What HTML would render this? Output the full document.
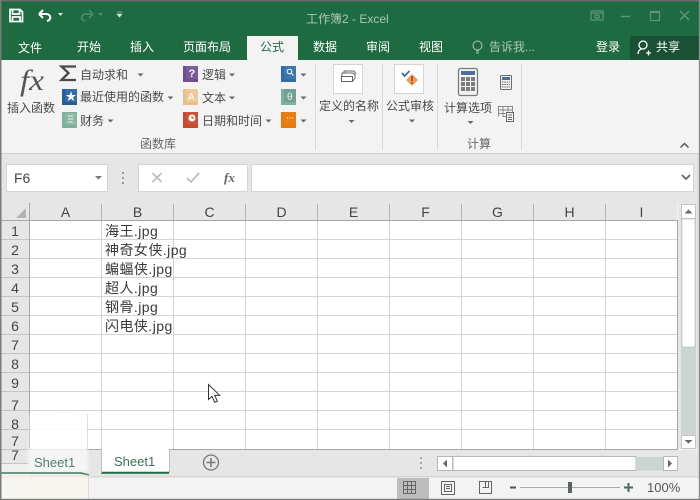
<!DOCTYPE html>
<html><head><meta charset="utf-8"><style>
html,body{margin:0;padding:0;width:700px;height:500px;overflow:hidden;background:#f3f3f3}
svg{display:block}
text{font-family:"Liberation Sans","Noto Sans CJK SC",sans-serif}
.t{font-size:12px;fill:#4a4a4a}
.w{font-size:12px;fill:#fff}
.h{font-size:14px;fill:#444;text-anchor:middle}
.c{font-size:14px;fill:#3a3a3a;letter-spacing:.45px}
.g{fill:none;stroke:#d4d4d4;stroke-width:1}
</style></head><body>
<svg width="700" height="500" viewBox="0 0 700 500" xmlns="http://www.w3.org/2000/svg">
<defs>
<filter id="b"><feGaussianBlur stdDeviation="1.6"/></filter>
</defs>
<rect width="700" height="500" fill="#f3f3f3"/>
<!-- title bar -->
<rect x="0" y="0" width="700" height="60" fill="#1f6b41"/>
<rect x="0" y="0" width="700" height="1.500" fill="#6b6b6b"/>
<!-- QAT -->
<g fill="none" stroke="#fff" stroke-width="1.700">
<path d="M10 9.500h10l2.500 2.500v9.500h-12.500z"/><path d="M12.500 9.500v4.500h7v-4.500M12.500 21.500v-4.500h7.500v4.500"/>
<path d="M39 14l4-4M39 14l4 4" stroke-width="2"/><path d="M39 14h7c5 0 6 6 1 7" stroke-width="2"/>
</g>
<path d="M58 13h5l-2.500 3z" fill="#d5e4dc"/>
<g fill="none" stroke="#4d8a68" stroke-width="1.700"><path d="M93 14l-4-4M93 14l-4 4"/><path d="M93 14h-7c-5 0-6 6-1 7"/></g>
<path d="M98 13h5l-2.500 3z" fill="#4d8a68"/>
<path d="M117 12h5M117 14h5l-2.500 3z" fill="#d5e4dc" stroke="#d5e4dc" stroke-width=".6"/>
<text x="306" y="23" style="font-size:12px;fill:#a9c7b6">工作簿2 - Excel</text>
<!-- window controls -->
<g fill="none" stroke="#5c9577" stroke-width="1.200">
<rect x="591" y="11" width="12" height="9"/><path d="M591 13h12M595 15h4v3h-4z"/>
<path d="M621 16.500h9" stroke-width="1.500"/>
<rect x="650.500" y="11.500" width="9" height="9"/><path d="M650 12.500h10"/>
<path d="M680 11l9 9M689 11l-9 9" stroke-width="1.500"/>
</g>
<!-- tabs -->
<rect x="247" y="36" width="51" height="24" fill="#f3f3f3"/>
<rect x="630" y="36" width="69" height="24" fill="#1a5134"/>
<text x="18" y="52" class="w">文件</text>
<text x="77" y="51" class="w">开始</text>
<text x="130" y="51" class="w">插入</text>
<text x="183" y="51" class="w">页面布局</text>
<text x="260" y="51" style="font-size:12px;fill:#1f6b41">公式</text>
<text x="313" y="51" class="w">数据</text>
<text x="366" y="51" class="w">审阅</text>
<text x="419" y="51" class="w">视图</text>
<g fill="none" stroke="#a9c7b6" stroke-width="1"><circle cx="477.500" cy="45.500" r="4.500"/><path d="M476 51h3M476 53h3"/></g>
<text x="489" y="51" style="font-size:12px;fill:#a9c7b6">告诉我...</text>
<text x="596" y="51" class="w">登录</text>
<g fill="none" stroke="#fff" stroke-width="1.300"><circle cx="643" cy="45" r="4"/><path d="M638 54c0-3 2-5 4-5M646 53h5M648.500 50.500v5"/></g>
<text x="656" y="51" class="w">共享</text>

<!-- ribbon -->
<rect x="0" y="60" width="700" height="93" fill="#f3f3f3"/>
<rect x="0" y="153" width="700" height="1" fill="#d2d2d2"/>
<g stroke="#d9d9d9"><path d="M315.500 64v86M382.500 64v86M437.500 64v86M521.500 64v86"/></g>
<text x="20" y="90" textLength="24" lengthAdjust="spacingAndGlyphs" style="font-family:'Liberation Serif',serif;font-style:italic;font-size:30px;fill:#555">fx</text>
<text x="7" y="112" class="t">插入函数</text>
<path d="M76 66.500h-14.500l7 6.500-7 7h14.500" fill="none" stroke="#4a4a4a" stroke-width="2.300"/>
<text x="80" y="79" class="t">自动求和</text>
<path d="M137.500 73.500h6l-3 3z" fill="#666"/>
<!-- book icons -->
<g>
<rect x="62" y="89" width="15" height="16" fill="#2a5a8e"/><rect x="65" y="89" width="12" height="13" fill="#2f6eab"/>
<text x="65.500" y="100" style="font-size:11px;fill:#fff">★</text>
<rect x="62" y="112" width="15" height="16" fill="#7fb09d"/><rect x="65" y="113" width="11" height="12" fill="#8cb8a6"/><path d="M68 116h5M68 119h5M68 122h5" stroke="#e5f0eb" stroke-width="1"/>
<rect x="183" y="66" width="15" height="16" fill="#6f4e8f"/><rect x="186" y="66" width="12" height="13" fill="#7a5b9b"/>
<text x="188.500" y="77" style="font-size:11px;font-weight:bold;fill:#fff">?</text>
<rect x="183" y="89" width="15" height="16" fill="#e8c08b"/><rect x="186" y="89" width="12" height="13" fill="#eec995"/>
<text x="188" y="100" style="font-size:10px;fill:#fff">A</text>
<rect x="183" y="112" width="15" height="16" fill="#c9492f"/><rect x="186" y="112" width="12" height="13" fill="#cc5136"/><circle cx="192" cy="118" r="3.500" fill="#fff"/><path d="M192 116v2h2" stroke="#c9492f" stroke-width="1" fill="none"/>
<rect x="281" y="66" width="15" height="16" fill="#2f6eab"/><rect x="284" y="66" width="12" height="13" fill="#3b78b0"/><circle cx="289.500" cy="71.500" r="2.300" fill="none" stroke="#fff" stroke-width="1"/><path d="M291 73l2.500 2.500" stroke="#fff"/>
<rect x="281" y="89" width="15" height="16" fill="#7fb09d"/><rect x="284" y="89" width="12" height="13" fill="#73a18e"/>
<text x="287" y="100" style="font-size:10px;fill:#e5f0eb">θ</text>
<rect x="281" y="112" width="15" height="16" fill="#e57a10"/><rect x="284" y="112" width="12" height="13" fill="#e87f12"/><path d="M287 118h1M289.500 118h1M292 118h1" stroke="#fff"/>
</g>
<text x="80" y="101" class="t">最近使用的函数</text>
<path d="M167.500 96.500h6l-3 3z" fill="#666"/>
<text x="80" y="125" class="t">财务</text>
<path d="M107.500 119.500h6l-3 3z" fill="#666"/>
<text x="202" y="79" class="t">逻辑</text>
<path d="M229 73.500h6l-3 3z" fill="#666"/>
<text x="202" y="102" class="t">文本</text>
<path d="M229 96.500h6l-3 3z" fill="#666"/>
<text x="202" y="125" class="t">日期和时间</text>
<path d="M265.500 119.500h6l-3 3z" fill="#666"/>
<path d="M300.500 73.500h6l-3 3zM300.500 96.500h6l-3 3zM300.500 119.500h6l-3 3z" fill="#666"/>
<text x="140" y="148" style="font-size:12px;fill:#666">函数库</text>
<!-- defined names -->
<rect x="333.500" y="64.500" width="29" height="29" fill="#fff" stroke="#d4d4d4"/>
<g fill="none" stroke="#666" stroke-width="1"><rect x="341.500" y="76.500" width="11" height="5"/><path d="M342 76v-3h11l2 2v3l-2 3M344 73v-2h10l2 3"/></g>
<text x="319" y="110" class="t">定义的名称</text>
<path d="M348.500 120h6l-3 3z" fill="#666"/>
<rect x="394.500" y="64.500" width="29" height="29" fill="#fff" stroke="#d4d4d4"/>
<path d="M402 73l2.500 3 5-5" fill="none" stroke="#3e6fa8" stroke-width="1.800"/>
<path d="M412 74l6 6-6 6-6-6z" fill="#ef9d5e"/><rect x="411.300" y="76" width="1.600" height="5" fill="#b3400e"/><rect x="411.300" y="82" width="1.600" height="1.700" fill="#b3400e"/>
<text x="386" y="110" class="t">公式审核</text>
<path d="M409 119.500h6l-3 3z" fill="#666"/>
<!-- calc -->
<rect x="458.500" y="68.500" width="19" height="27" rx="2" fill="#f2f2f2" stroke="#7b7b7b" stroke-width="1.300"/>
<rect x="461" y="71" width="14" height="4" fill="#4f6d9b"/>
<g fill="#7c7c7c"><rect x="461" y="77" width="4" height="4"/><rect x="466" y="77" width="4" height="4"/><rect x="471" y="77" width="4" height="4"/><rect x="461" y="82" width="4" height="4"/><rect x="466" y="82" width="4" height="4"/><rect x="471" y="82" width="4" height="4"/><rect x="461" y="87" width="4" height="4"/><rect x="466" y="87" width="4" height="4"/><rect x="471" y="87" width="4" height="4"/></g>
<text x="444" y="112" class="t">计算选项</text>
<path d="M467.500 121h6l-3 3z" fill="#666"/>
<rect x="500.500" y="75.500" width="11" height="14" rx="1" fill="#f2f2f2" stroke="#6b6b6b"/>
<rect x="502" y="77" width="8" height="3" fill="#4f6d9b"/>
<path d="M502 82h8M502 84.500h8M502 87h8" stroke="#6b6b6b" stroke-dasharray="1.500 .8"/>
<g fill="none" stroke="#8a8a8a"><path d="M498.500 116.500v-10h14v6M498.500 110h14M498.500 113.500h7M503 106.500v10h3M508 106.500v5"/><rect x="506.500" y="112.500" width="7" height="9" fill="#f3f3f3" stroke="#666"/></g>
<path d="M508 115h4M508 117.500h4M508 119.500h4" stroke="#666"/>
<text x="467" y="148" style="font-size:12px;fill:#666">计算</text>
<path d="M680.500 147.500l4-4 4 4" fill="none" stroke="#555" stroke-width="1.500"/>

<!-- formula bar -->
<rect x="0" y="154" width="700" height="49" fill="#e6e6e6"/>
<rect x="6.500" y="164.500" width="101" height="27" fill="#fff" stroke="#d4d4d4"/>
<text x="14" y="183" style="font-size:14px;fill:#444">F6</text>
<path d="M95 176h7l-3.500 3.500z" fill="#777"/>
<path d="M123 172v2M123 177v2M123 182v2" stroke="#999" stroke-width="2"/>
<rect x="138.500" y="164.500" width="109" height="27" fill="#fff" stroke="#d4d4d4"/>
<path d="M152.500 173l9 9M161.500 173l-9 9" stroke="#bcbcbc" stroke-width="1.600"/>
<path d="M187 178l4 4 8-9" fill="none" stroke="#bcbcbc" stroke-width="1.800"/>
<text x="224" y="182" style="font-family:'Liberation Serif',serif;font-style:italic;font-weight:bold;font-size:13px;fill:#666">fx</text>
<rect x="251.500" y="164.500" width="442" height="27" fill="#fff" stroke="#d4d4d4"/>
<path d="M682 175l4 4 4-4" fill="none" stroke="#666" stroke-width="1.700"/>

<!-- grid -->
<rect x="30" y="220" width="647" height="229" fill="#fff"/>
<rect x="0" y="203" width="677" height="17" fill="#e6e6e6"/>
<rect x="0" y="203" width="30" height="246" fill="#e6e6e6"/>
<path d="M26 208v10h-10z" fill="#b4b4b4"/>
<path class="g" d="M30 239.500h647M30 258.500h647M30 277.500h647M30 296.500h647M30 315.500h647M30 334.500h647M30 353.500h647M30 372.500h647M30 391.500h647M30 410.500h647M30 429.500h647"/>
<path class="g" d="M101.500 220v229M173.500 220v229M245.500 220v229M317.500 220v229M389.500 220v229M461.500 220v229M533.500 220v229M605.500 220v229"/>
<path d="M29.500 203v246M0 220.500h678M677.500 220v229M30 449.500h648" stroke="#a6a6a6" fill="none"/>
<path d="M101.500 204v16M173.500 204v16M245.500 204v16M317.500 204v16M389.500 204v16M461.500 204v16M533.500 204v16M605.500 204v16" stroke="#b3b3b3"/>
<path d="M0 239.500h29M0 258.500h29M0 277.500h29M0 296.500h29M0 315.500h29M0 334.500h29M0 353.500h29M0 372.500h29M0 391.500h29M0 410.500h29M0 429.500h29" stroke="#c4c4c4"/>
<text class="h" x="65.500" y="217">A</text><text class="h" x="137.500" y="217">B</text><text class="h" x="209.500" y="217">C</text><text class="h" x="281.500" y="217">D</text><text class="h" x="353.500" y="217">E</text><text class="h" x="425.500" y="217">F</text><text class="h" x="497.500" y="217">G</text><text class="h" x="569.500" y="217">H</text><text class="h" x="641.500" y="217">I</text>
<text class="h" x="15" y="236">1</text><text class="h" x="15" y="255">2</text><text class="h" x="15" y="274">3</text><text class="h" x="15" y="293">4</text><text class="h" x="15" y="312">5</text><text class="h" x="15" y="331">6</text><text class="h" x="15" y="350">7</text><text class="h" x="15" y="369">8</text><text class="h" x="15" y="388">9</text><text class="h" x="15" y="410">7</text><text class="h" x="15" y="429">8</text><text class="h" x="15" y="446">7</text>
<text class="c" x="105" y="236">海王.jpg</text>
<text class="c" x="105" y="255">神奇女侠.jpg</text>
<text class="c" x="105" y="274">蝙蝠侠.jpg</text>
<text class="c" x="105" y="293">超人.jpg</text>
<text class="c" x="105" y="312">钢骨.jpg</text>
<text class="c" x="105" y="331">闪电侠.jpg</text>
<!-- mouse -->
<path d="M208.500 384.500v15l3.500-3.200 2.700 6 2.700-1.100-2.700-5.800h5z" fill="#fff" stroke="#333"/>
<!-- scrollbar v -->
<rect x="678" y="203" width="22" height="246" fill="#e6e6e6"/>
<rect x="681" y="219" width="15" height="216" fill="#cdd5d3"/>
<rect x="682" y="219" width="13" height="128" fill="#fff" stroke="#a6a6a6" stroke-width=".5"/>
<rect x="681.500" y="204.500" width="14" height="14" fill="#fff" stroke="#c4c4c4"/>
<path d="M684.500 213.500l4-4 4 4z" fill="#666"/>
<rect x="681.500" y="435.500" width="14" height="13" fill="#fff" stroke="#c4c4c4"/>
<path d="M684.500 440h8l-4 3.500z" fill="#666"/>
<!-- sheet tabs -->
<rect x="30" y="450" width="670" height="27" fill="#e6e6e6"/>
<rect x="0" y="449" width="30" height="15" fill="#e6e6e6"/>
<rect x="0" y="464" width="30" height="13" fill="#f0f0f0"/>
<path d="M0 463.500h29" stroke="#c4c4c4"/>
<rect x="0" y="476.500" width="700" height=".8" fill="#c6c6c6"/>
<path d="M0 449.500h29" stroke="#c4c4c4"/>
<rect x="101" y="449" width="68" height="24" fill="#fff"/>
<path d="M101 472.800h68" stroke="#1f6b41" stroke-width="2"/>
<path d="M101.500 449v24M169.500 449v24" stroke="#c0c0c0"/>
<text x="114" y="466" style="font-size:13px;fill:#3d6e55">Sheet1</text>
<circle cx="211" cy="462.500" r="7.500" fill="none" stroke="#777" stroke-width="1.300"/>
<path d="M206.500 462.500h9M211 458v9" stroke="#777" stroke-width="1.500"/>
<!-- smudge -->
<path d="M30 414l40-2 17 3v35h-57z" fill="#fff" filter="url(#b)" opacity=".9"/>
<path d="M28 449h60v23h-60z" fill="#f5f5f5" filter="url(#b)"/>
<path d="M87.500 414v36" stroke="#d8d8d8" opacity=".8"/>
<path d="M1 473h80l8 2" stroke="#3d7a57" stroke-width="1.600" fill="none"/>
<text class="h" x="15" y="460">7</text>
<text x="34" y="467" style="font-size:13px;fill:#4f8268">Sheet1</text>
<path d="M1 476h88v23H1z" fill="#f7f5f0" filter="url(#b)"/>
<path d="M88.500 477v22" stroke="#e5d8c4"/>
<!-- h scroll -->
<path d="M421 458v2M421 463v2M421 468v2" stroke="#999" stroke-width="1.600" transform="translate(0,-1)"/>
<rect x="437.500" y="456.500" width="15" height="14" fill="#fff" stroke="#b8b8b8"/>
<path d="M447 459.500v8l-4-4z" fill="#666"/>
<rect x="453" y="456.500" width="183" height="14" fill="#fff" stroke="#b8b8b8"/>
<rect x="636" y="457" width="28" height="13.500" fill="#cdd5d3"/>
<rect x="663.500" y="456.500" width="14" height="14" fill="#fff" stroke="#b8b8b8"/>
<path d="M668 459.500v8l4-4z" fill="#666"/>
<!-- status bar -->
<rect x="89" y="477.500" width="611" height="21.500" fill="#f3f3f3"/>
<rect x="397" y="478" width="32" height="21" fill="#bdbdbd"/>
<g fill="none" stroke="#666">
<path d="M403.500 481.500h12v12h-12zM403.500 485.500h12M403.500 489.500h12M407.500 481.500v12M411.500 481.500v12"/>
<rect x="441.500" y="481.500" width="13" height="13"/><rect x="444.500" y="484.500" width="7" height="7"/><path d="M446 486.500h4M446 488.500h4"/>
<path d="M479.500 481.500h12v12h-12zM485.500 481.500v6h-3"/><path d="M485.500 487.500h3v-6"/>
</g>
<path d="M510 487.500h6" stroke="#555" stroke-width="2"/>
<path d="M520 487.500h100" stroke="#aaa"/>
<rect x="568" y="482" width="4" height="11" fill="#56685f"/>
<path d="M624 487.500h9M628.500 483v9" stroke="#4f6a5a" stroke-width="2"/>
<text x="647" y="492" style="font-size:13px;fill:#555">100%</text>
<!-- window edge -->
<rect x="0" y="0" width="1.500" height="500" fill="#7a7a7a"/>
<rect x="698.800" y="0" width="1.200" height="500" fill="#8a8a8a"/>
<rect x="0" y="498.800" width="700" height="1.200" fill="#7a7a7a"/>
</svg>
</body></html>
